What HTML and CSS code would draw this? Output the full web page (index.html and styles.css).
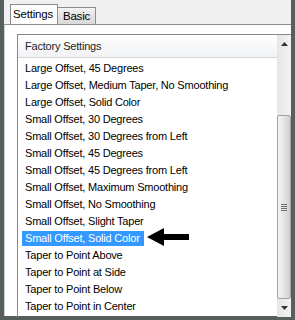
FILE: index.html
```html
<!DOCTYPE html>
<html lang="en">
  <head>
    <meta charset="UTF-8" />
    <title>Settings</title>
    <link rel="stylesheet" href="styles.css">
  </head>
  <body>
    <div class="window">
      <!-- Tabs -->
      <div class="tabstrip">
        <div class="tab active">Settings</div>
        <div class="tab">Basic</div>
      </div>

      <!-- Tab page -->
      <div class="page">
        <div class="listbox">
          <div class="list">
            <div class="list-header">Factory Settings</div>
            <div class="items">
              <div class="item">Large Offset, 45 Degrees</div>
              <div class="item">Large Offset, Medium Taper, No Smoothing</div>
              <div class="item">Large Offset, Solid Color</div>
              <div class="item">Small Offset, 30 Degrees</div>
              <div class="item">Small Offset, 30 Degrees from Left</div>
              <div class="item">Small Offset, 45 Degrees</div>
              <div class="item">Small Offset, 45 Degrees from Left</div>
              <div class="item">Small Offset, Maximum Smoothing</div>
              <div class="item">Small Offset, No Smoothing</div>
              <div class="item">Small Offset, Slight Taper</div>
              <div class="item selected">
                <span class="label">Small Offset, Solid Color</span>
                <svg class="pointer" width="42" height="18" viewBox="0 0 42 18">
                  <polygon points="0,9 17,0 17,6 42,6 42,12 17,12 17,18" fill="#000" />
                </svg>
              </div>
              <div class="item">Taper to Point Above</div>
              <div class="item">Taper to Point at Side</div>
              <div class="item">Taper to Point Below</div>
              <div class="item">Taper to Point in Center</div>
            </div>
          </div>

          <!-- Scrollbar -->
          <div class="scrollbar">
            <div class="sb-btn">
              <svg width="7" height="4" viewBox="0 0 7 4"><polygon points="0,4 3.5,0 7,4" fill="#333" /></svg>
            </div>
            <div class="sb-track"></div>
            <div class="sb-thumb">
              <div class="grip">
                <span></span><span></span><span></span><span></span>
              </div>
            </div>
            <div class="sb-btn down">
              <svg width="7" height="4" viewBox="0 0 7 4"><polygon points="0,0 7,0 3.5,4" fill="#333" /></svg>
            </div>
          </div>
        </div>
      </div>
    </div>
  </body>
</html>
```

FILE: styles.css
```css
/* General Styles */
body {
  margin: 0;
  padding: 0;
  width: 295px;
  height: 320px;
  overflow: hidden;
  font-family: "Liberation Sans", Arial, sans-serif;
  font-size: 11px;
  letter-spacing: -0.2px;
  color: #000;
}

.window {
  box-sizing: border-box;
  width: 295px;
  height: 320px;
  border: 4px solid #575f5d;
  border-top: none;
  background-color: #f0f0f0;
  display: flex;
  flex-direction: column;
}

/* Tabs */
.tabstrip {
  height: 24px;
  padding-left: 6px;
  display: flex;
  align-items: flex-end;
}

.tab {
  box-sizing: border-box;
  height: 17px;
  padding: 0 5px 0 5px;
  border: 1px solid #898c95;
  border-bottom: none;
  border-left: none;
  background: linear-gradient(#f3f3f3, #e3e3e3 50%, #d9d9d9);
  line-height: 17px;
  font-size: 11.5px;
}

.tab.active {
  height: 21px;
  margin-bottom: -1px;
  padding: 0 4px 0 2px;
  border-left: 1px solid #898c95;
  background: #fff;
  line-height: 19px;
}

/* Tab page */
.page {
  flex: 1;
  min-height: 0;
  background-color: #fff;
  border-top: 1px solid #898c95;
  border-left: 1px solid #d0d0d0;
  padding: 9px 0 0 12px;
}

.listbox {
  height: 100%;
  border-top: 1px solid #828790;
  border-left: 1px solid #828790;
  display: grid;
  grid-template-columns: 1fr 14px;
  overflow: hidden;
}

.list-header {
  height: 22px;
  border-bottom: 1px solid #d5d5d5;
  background: linear-gradient(#ffffff, #f7f8fa 50%, #f1f2f4);
  padding-left: 7px;
  line-height: 23px;
  color: #1e1e1e;
}

.items {
  padding-top: 2px;
}

.item {
  height: 17px;
  padding-left: 7px;
  line-height: 17px;
  white-space: nowrap;
  display: flex;
  align-items: center;
}

.item.selected {
  padding-left: 4px;
}

.item.selected .label {
  background-color: #3399ff;
  color: #fff;
  height: 15px;
  line-height: 15px;
  padding: 0 4px 0 3px;
}

.pointer {
  margin-left: 3px;
  margin-top: -3px;
}

/* Scrollbar */
.scrollbar {
  background: linear-gradient(90deg, #e6e6e6, #f2f2f2);
  display: flex;
  flex-direction: column;
}

.sb-btn {
  height: 18px;
  display: flex;
  align-items: center;
  justify-content: center;
}

.sb-track {
  height: 62px;
}

.sb-thumb {
  flex: 1;
  box-sizing: border-box;
  border: 1px solid #a3a3a3;
  border-radius: 2px;
  background: linear-gradient(90deg, #f4f4f4, #e4e4e4 50%, #cfcfcf);
  display: flex;
  align-items: center;
  justify-content: center;
}

.grip {
  display: flex;
  flex-direction: column;
  gap: 1px;
}

.grip span {
  display: block;
  width: 6px;
  height: 1px;
  background-color: #6e6e6e;
}
```
